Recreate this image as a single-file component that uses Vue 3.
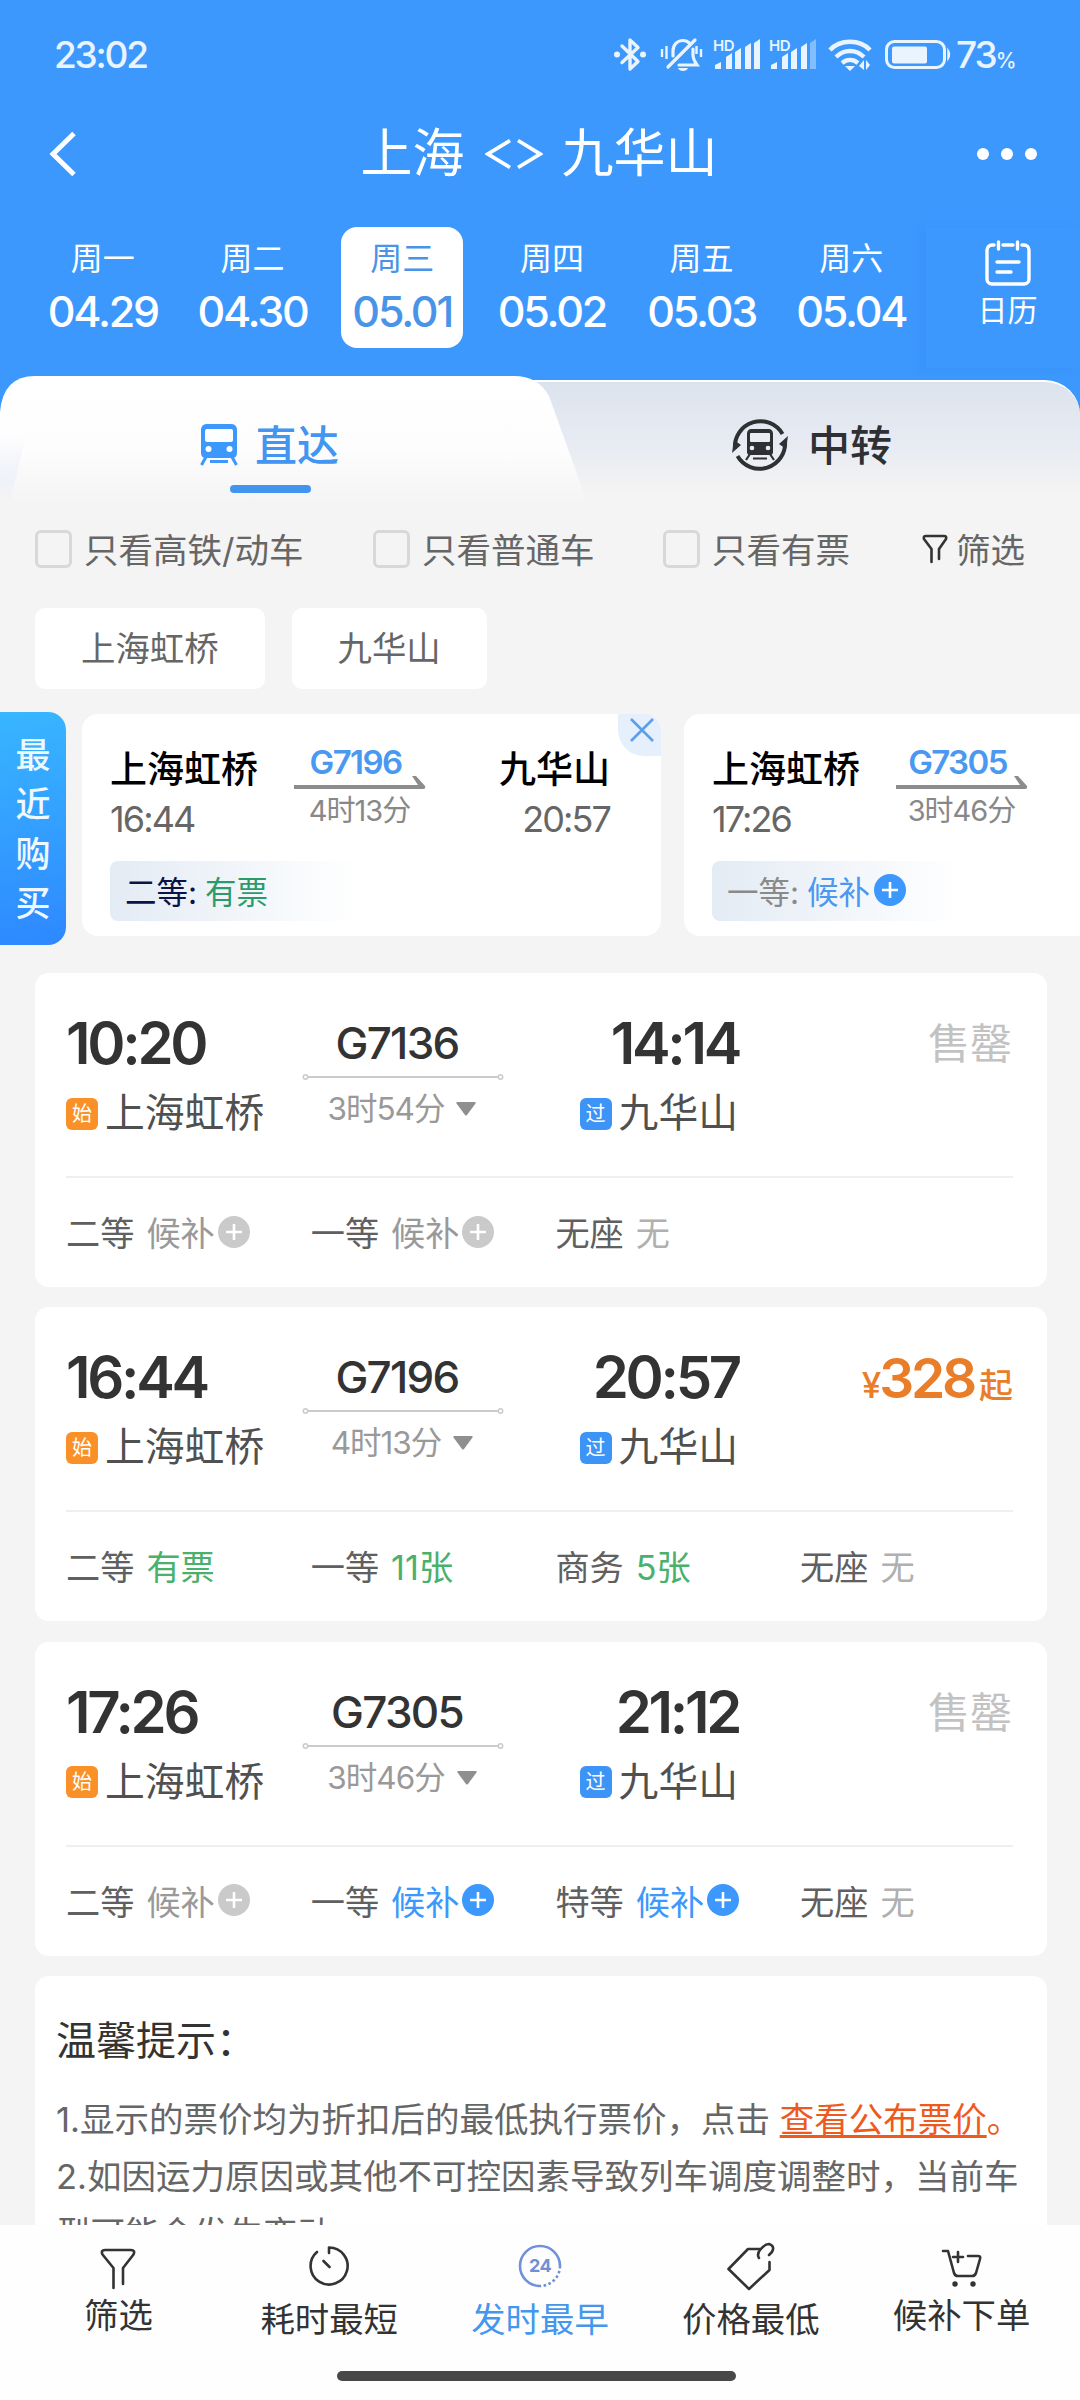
<script setup>
const days = [
  { week: '周一', date: '04.29' },
  { week: '周二', date: '04.30' },
  { week: '周三', date: '05.01', active: true },
  { week: '周四', date: '05.02' },
  { week: '周五', date: '05.03' },
  { week: '周六', date: '05.04' },
]

const recents = [
  {
    from: '上海虹桥', to: '九华山', start: '16:44', end: '20:57',
    code: 'G7196', cost: ['4', '13'], seat: '二等', state: '有票', type: 'ok', closable: true,
  },
  {
    from: '上海虹桥', start: '17:26',
    code: 'G7305', cost: ['3', '46'], seat: '一等', state: '候补', type: 'wait',
  },
]

const trains = [
  {
    start: '10:20', end: '14:14', code: 'G7136', cost: ['3', '54'], price: null,
    seats: [
      { name: '二等', state: '候补', type: 'off' },
      { name: '一等', state: '候补', type: 'off' },
      { name: '无座', state: '无', type: 'none' },
    ],
  },
  {
    start: '16:44', end: '20:57', code: 'G7196', cost: ['4', '13'], price: 328,
    seats: [
      { name: '二等', state: '有票', type: 'ok' },
      { name: '一等', state: '11张', type: 'ok' },
      { name: '商务', state: '5张', type: 'ok' },
      { name: '无座', state: '无', type: 'none' },
    ],
  },
  {
    start: '17:26', end: '21:12', code: 'G7305', cost: ['3', '46'], price: null,
    seats: [
      { name: '二等', state: '候补', type: 'off' },
      { name: '一等', state: '候补', type: 'wait' },
      { name: '特等', state: '候补', type: 'wait' },
      { name: '无座', state: '无', type: 'none' },
    ],
  },
]

const hasPlus = (type) => type === 'off' || type === 'wait'
</script>

<template>
  <div class="page">
    <header class="header">
      <div class="status">
        <span class="clock">23:02</span>
        <svg class="status-icons" width="372" height="44" viewBox="0 0 372 44" fill="none" stroke="#eaf4ff">
          <!-- bluetooth -->
          <path d="M9 12 25 27.500 17 35V6L25 13.500 9 28.500" stroke-width="3.400" stroke-linejoin="round" stroke-linecap="round" />
          <circle cx="4" cy="20.500" r="3" fill="#eaf4ff" stroke="none" />
          <circle cx="30" cy="20.500" r="3" fill="#eaf4ff" stroke="none" />
          <!-- muted bell -->
          <path d="M60 22v-5c0-6 4-10.500 10-10.500 3 0 5 1 7 3M80 15v6c0 4 2 7 4 10H66M55 33 82 6" stroke-width="3.200" stroke-linecap="round" />
          <path d="M49 15v8M53.500 12v13M88 15v8M83.500 12v8" stroke-width="2.400" />
          <path d="M65 34h10c-1 4-9 4-10 0z" fill="#eaf4ff" stroke="none" />
          <!-- signal bars -->
          <g fill="#eaf4ff" stroke="none">
            <text x="100" y="17" class="hd">HD</text>
            <path d="M102 35v-4l6-3v7zM113 35V23l6-4v16zM122 35V18l6-4v21zM132 35V13l6-4v26zM141 35V9l6-4v30z" />
            <text x="156" y="17" class="hd">HD</text>
            <path d="M158 35v-4l6-3v7zM169 35V23l6-4v16zM178 35V18l6-4v21zM188 35V13l6-4v26z" />
            <path d="M197 35V9l6-4v30z" opacity=".4" />
          </g>
          <!-- wifi -->
          <path d="M217 16c10-11 30-11 40 0M223 23c8-8 20-8 28 0M229 29c5-4 11-4 16 0" stroke-width="4.400" />
          <path d="M232 32h10l-5 5zM246 32l5-6v10zM253 26v10l4-5z" fill="#eaf4ff" stroke="none" />
          <!-- battery -->
          <rect x="273.500" y="7.500" width="58" height="26" rx="8" stroke-width="3" />
          <rect x="279" y="12.500" width="35" height="17" rx="2" fill="#eaf4ff" stroke="none" />
          <path d="M335 16q3 4.500 0 9z" fill="#eaf4ff" stroke-width="1.500" />
        </svg>
        <span class="battery">73<small>%</small></span>
      </div>

      <div class="nav">
        <svg width="30" height="46" viewBox="0 0 30 46"><path d="M27 2.500 6 23 27 43.500" fill="none" stroke="#fff" stroke-width="5" /></svg>
        <h1>上海<svg width="58" height="32" viewBox="0 0 58 32"><path d="M25 2.500 3 16l22 13.500M33 2.500 55 16 33 29.500" fill="none" stroke="#fff" stroke-width="3.800" /></svg>九华山</h1>
        <svg width="60" height="14" viewBox="0 0 60 14" fill="#fff"><circle cx="6" cy="7" r="6" /><circle cx="30" cy="7" r="6" /><circle cx="54" cy="7" r="6" /></svg>
      </div>

      <div class="days">
        <div v-for="d in days" :key="d.date" class="day" :class="{ active: d.active }">
          <div class="day-in">
            <span class="week">{{ d.week }}</span>
            <span class="date">{{ d.date }}</span>
          </div>
        </div>
        <div class="calendar">
          <svg width="46" height="46" viewBox="0 0 46 46" fill="none" stroke="#fff" stroke-width="3.400" stroke-linecap="round">
            <path d="M9 5H7a5 5 0 0 0-5 5v29a5 5 0 0 0 5 5h32a5 5 0 0 0 5-5V10a5 5 0 0 0-5-5h-2M18 5h10M13.500 2v7M32.500 2v7M12 22h22M12 32h14" />
          </svg>
          <span>日历</span>
        </div>
      </div>
    </header>

    <div class="tabs">
      <svg class="tabs-bg" width="1080" height="134" viewBox="0 0 1080 134">
        <defs>
          <linearGradient id="tabOn" x1="0" y1="0" x2="0" y2="1">
            <stop offset="0" stop-color="#fff" />
            <stop offset=".55" stop-color="#fdfdfe" />
            <stop offset=".95" stop-color="#f4f4f4" />
          </linearGradient>
          <linearGradient id="tabOff" x1="0" y1="0" x2="0" y2="1">
            <stop offset="0" stop-color="#dce3ee" />
            <stop offset=".5" stop-color="#e8ebf2" />
            <stop offset=".88" stop-color="#f4f4f4" />
          </linearGradient>
          <linearGradient id="tabEdge" x1="0" y1="0" x2="0" y2="1">
            <stop offset="0" stop-color="#eef1f8" stop-opacity="0" />
            <stop offset=".6" stop-color="#eff2f8" />
            <stop offset="1" stop-color="#f4f4f4" />
          </linearGradient>
        </defs>
        <path d="M0 0H1080V60H0z" fill="#3c98fd" />
        <path d="M500 134V4h545a35 35 0 0 1 35 35v95z" fill="#fff" />
        <path d="M500 134V6h545a35 33 0 0 1 35 33v95z" fill="url(#tabOff)" />
        <path d="M0 134V36Q3 0 35 0H514q24 0 35 20L590 134z" fill="url(#tabOn)" />
        <path d="M0 60H26L8 134H0z" fill="url(#tabEdge)" />
      </svg>
      <div class="tab on">
        <svg width="38" height="42" viewBox="0 0 38 42">
          <path d="M7 0h24q5 0 6 5v24q0 5-5 5H6q-5 0-5-5V5q1-5 6-5z" fill="#3c98fd" />
          <rect x="5" y="5" width="28" height="13" rx="2" fill="#fdfeff" />
          <circle cx="8.500" cy="25" r="3" fill="#fdfeff" /><circle cx="29.500" cy="25" r="3" fill="#fdfeff" />
          <path d="M6 33 1.500 41M32 33l4.500 8M10 37.500h18" stroke="#3c98fd" stroke-width="3" />
        </svg>
        <span>直达</span>
        <i></i>
      </div>
      <div class="tab off">
        <svg width="56" height="58" viewBox="0 0 56 58" fill="none" stroke="#2e3034">
          <path d="M3 33A25.500 25.500 0 0 1 50.500 18M53 25A25.500 25.500 0 0 1 5.500 40" stroke-width="4" />
          <path d="M0 37 9 29 2 24zM56 20l-9 8 7 5z" fill="#2e3034" stroke="none" />
          <path d="M19 13h18q3 0 4 4v19q0 3-3 3H18q-3 0-3-3V17q1-4 4-4z" fill="#2e3034" stroke="none" />
          <rect x="18" y="17" width="20" height="9" rx="1" fill="#e9ecf2" stroke="none" />
          <circle cx="20" cy="32" r="2.300" fill="#e9ecf2" stroke="none" /><circle cx="36" cy="32" r="2.300" fill="#e9ecf2" stroke="none" />
          <path d="M18 38l-4 6M38 38l4 6M21 42.500h14" stroke-width="2.200" />
        </svg>
        <span>中转</span>
      </div>
    </div>

    <main class="content">
      <div class="filters">
        <label class="check c1"><i></i><span>只看高铁/动车</span></label>
        <label class="check c2"><i></i><span>只看普通车</span></label>
        <label class="check c3"><i></i><span>只看有票</span></label>
        <span class="sift">
          <svg width="26" height="30" viewBox="0 0 26 30"><path d="M9.500 28V15L2 5Q1 2 4 2H22q3 0 2 3l-7 10V25" fill="none" stroke="#333" stroke-width="2.600" stroke-linecap="round" stroke-linejoin="round" /></svg>
          <span>筛选</span>
        </span>
      </div>

      <div class="chips">
        <span>上海虹桥</span>
        <span>九华山</span>
      </div>

      <section class="recent">
        <div class="recent-label"><b>最</b><b>近</b><b>购</b><b>买</b></div>
        <div v-for="r in recents" :key="r.code" class="recent-card">
          <div class="recent-row">
            <div class="recent-from">
              <strong>{{ r.from }}</strong>
              <time>{{ r.start }}</time>
            </div>
            <div class="recent-mid">
              <em>{{ r.code }}</em>
              <svg width="132" height="14" viewBox="0 0 132 14"><path d="M0 9H124L118 0h4l9 10q1 3-2 3H0z" fill="#8c8c8c" /></svg>
              <span>{{ r.cost[0] }}时{{ r.cost[1] }}分</span>
            </div>
            <div v-if="r.to" class="recent-to">
              <strong>{{ r.to }}</strong>
              <time>{{ r.end }}</time>
            </div>
          </div>
          <div class="recent-tag" :class="r.type">
            <span>{{ r.seat }}:</span><b>{{ r.state }}</b>
            <svg v-if="r.type === 'wait'" class="plus" viewBox="0 0 32 32"><circle cx="16" cy="16" r="16" /><path d="M16 8v16M8 16h16" /></svg>
          </div>
          <div v-if="r.closable" class="recent-close">
            <svg width="26" height="26" viewBox="0 0 26 26"><path d="M2 2 24 24M24 2 2 24" stroke="#5c9ded" stroke-width="2.600" /></svg>
          </div>
        </div>
      </section>

      <article v-for="t in trains" :key="t.code" class="train">
        <div class="train-main">
          <div class="col-from">
            <span class="time">{{ t.start }}</span>
            <span class="station"><i class="start">始</i>上海虹桥</span>
          </div>
          <div class="col-mid">
            <span class="code">{{ t.code }}</span>
            <svg width="202" height="8" viewBox="0 0 202 8" fill="#fff" stroke="#cbcbcb" stroke-width="1.500"><path d="M5 4H197" stroke-width="2" /><circle cx="3.500" cy="4" r="2.200" /><circle cx="198.500" cy="4" r="2.200" /></svg>
            <span class="cost">{{ t.cost[0] }}时{{ t.cost[1] }}分<svg width="20" height="14" viewBox="0 0 20 14"><path d="M1 0h18q1 0 .5 1.500L11 13q-1 1-2 0L.5 1.500Q0 0 1 0z" fill="#8f8f8f" /></svg></span>
          </div>
          <div class="col-to">
            <span class="time">{{ t.end }}</span>
            <span class="station"><i class="pass">过</i>九华山</span>
          </div>
          <div class="col-price">
            <span v-if="t.price" class="price"><small>¥</small>{{ t.price }}<em>起</em></span>
            <span v-else class="sold">售罄</span>
          </div>
        </div>
        <div class="seats">
          <div v-for="s in t.seats" :key="s.name" class="seat" :class="s.type">
            <span>{{ s.name }}</span><b>{{ s.state }}</b>
            <svg v-if="hasPlus(s.type)" class="plus" viewBox="0 0 32 32"><circle cx="16" cy="16" r="16" /><path d="M16 8v16M8 16h16" /></svg>
          </div>
        </div>
      </article>

      <section class="tips">
        <h2>温馨提示：</h2>
        <p>1.显示的票价均为折扣后的最低执行票价，点击 <a>查看公布票价</a><u>。</u></p>
        <p>2.如因运力原因或其他不可控因素导致列车调度调整时，当前车<br>型可能会发生变动</p>
      </section>
    </main>

    <footer class="bottom">
      <nav class="sorts">
        <div class="sort short">
          <svg width="48" height="50" viewBox="0 0 48 50"><path d="M19.500 43V23L8.500 9.500Q6.500 5 11 5H37q4.500 0 2.500 4.500L29 23V39" /></svg>
          <span>筛选</span>
        </div>
        <div class="sort">
          <svg width="48" height="50" viewBox="0 0 48 50"><path d="M24 9V3.500A18.500 18.500 0 1 1 12 8M18.500 17 24.500 23" /></svg>
          <span>耗时最短</span>
        </div>
        <div class="sort active">
          <svg width="48" height="50" viewBox="0 0 48 50"><path d="M24 42A20 20 0 1 1 44 22" /><path d="M44 22A20 20 0 0 1 24 42" stroke-dasharray="2.500 2.500" /><text x="24" y="28" text-anchor="middle">24</text></svg>
          <span>发时最早</span>
        </div>
        <div class="sort">
          <svg width="48" height="50" viewBox="0 0 48 50"><path d="M34 5H21L1.500 25 22 45 42.500 26V18M32 14c-4-6 6-14 10-14 6 2 5 7 0 11" /></svg>
          <span>价格最低</span>
        </div>
        <div class="sort short">
          <svg width="48" height="50" viewBox="0 0 48 50"><path d="M5 6h5l6 22q1 3 4 3H34q3 0 4-3l4-14q1-3-2-3H30M20 7v10M15 12H25" /><circle class="dot" cx="17" cy="39" r="2.700" /><circle class="dot" cx="35" cy="39" r="2.700" /></svg>
          <span>候补下单</span>
        </div>
      </nav>
      <div class="home"></div>
    </footer>
  </div>
</template>

<style>
body { margin: 0; background: #f4f4f4; }
</style>

<style scoped>
.page {
  width: 1080px; height: 2400px; overflow: hidden; display: flex; flex-direction: column;
  background: #f4f4f4; color: #333; font-family: Inter, "Noto Sans CJK SC", sans-serif;
}
svg { display: block; flex: none; }
i, em { font-style: normal; }
h1, h2, p { margin: 0; }

/* header */
.header { height: 376px; flex: none; background: #3c98fd; color: #fff; }
.status { height: 76px; padding: 34px 64px 0 54px; box-sizing: border-box; display: flex; color: #eaf4ff; }
.clock { font-size: 37px; line-height: 42px; font-weight: 500; letter-spacing: -2.200px; }
.status-icons { margin-left: auto; margin-right: -29px; }
.status-icons .hd { font-size: 15px; font-weight: 600; font-family: Inter, sans-serif; letter-spacing: -.5px; }
.battery { width: 60px; font-size: 37px; line-height: 42px; font-weight: 500; letter-spacing: -2px; white-space: nowrap; }
.battery small { font-size: 21px; letter-spacing: 0; }
.nav { height: 156px; padding: 0 43px 0 47px; display: flex; align-items: center; justify-content: space-between; }
.nav h1 { display: flex; align-items: center; font-size: 52px; font-weight: 400; line-height: 70px; margin-left: 24px; }
.nav h1 svg { margin: 0 19px 0 20px; }
.days { display: flex; padding: 0 0 0 28px; margin-top: -5px; }
.day { width: 149.700px; flex: none; display: flex; justify-content: center; }
.day-in {
  width: 122px; height: 121px; border-radius: 16px; display: flex; flex-direction: column; align-items: center;
}
.week { font-size: 32px; line-height: 40px; margin-top: 12px; }
.date { font-size: 43px; line-height: 44px; font-weight: 500; margin-top: 10px; letter-spacing: -2.200px; }
.day.active .day-in { background: #fff; color: #4a94e8; }
.calendar {
  flex: 1; height: 128px; padding: 12px 0 0 9px; margin-top: 1px; display: flex; flex-direction: column; align-items: center;
  box-shadow: -6px 2px 10px rgba(30, 110, 220, .1);
}
.calendar span { font-size: 30px; line-height: 36px; margin-top: 6px; }

/* tabs */
.tabs { position: relative; height: 134px; flex: none; display: flex; background: #f4f4f4; }
.tabs-bg { position: absolute; left: 0; top: 0; }
.tab { position: relative; display: flex; align-items: center; height: 138px; font-size: 42px; font-weight: 500; box-sizing: border-box; }
.tab span { margin-bottom: 5px; }
.tab.on { width: 540px; padding-left: 200px; color: #4295f0; }
.tab.on span { margin-left: 17px; }
.tab.on i { position: absolute; left: 230px; top: 109px; width: 81px; height: 8px; border-radius: 4px; background: #4295ee; }
.tab.off { padding-left: 192px; color: #2e3034; }
.tab.off span { margin-left: 20px; }

/* filters */
.content { flex: 1; min-height: 0; overflow: hidden; }
.filters { height: 78px; padding: 0 55px 0 35px; display: flex; align-items: center; font-size: 34.500px; color: #666; }
.filters span > span, .check span { margin-bottom: 3px; }
.check { display: flex; align-items: center; white-space: nowrap; flex: none; }
.check i { width: 31px; height: 32px; border: 3px solid #d8d8d8; border-radius: 6px; margin-right: 12px; }
.c1 { width: 338px; }
.c2 { width: 290px; }
.c3 { width: 259px; }
.sift { display: flex; align-items: center; gap: 8px; white-space: nowrap; }
.chips { display: flex; gap: 27px; padding: 20px 35px 0; }
.chips span {
  height: 81px; line-height: 81px; padding: 0 46px; background: #fff; border-radius: 10px;
  font-size: 34.400px; color: #666;
}

/* recent purchases */
.recent { display: flex; margin-top: 23px; height: 261px; }
.recent-label {
  width: 66px; height: 233px; flex: none; box-sizing: border-box; padding-top: 19px; border-radius: 0 18px 18px 0;
  display: flex; flex-direction: column; align-items: center; color: #eef8ff;
  background: linear-gradient(172deg, #38b6ff, #2e88ff);
}
.recent-label b { font-size: 35px; line-height: 49.300px; font-weight: 500; }
.recent-card {
  position: relative; width: 579px; height: 222px; flex: none; box-sizing: border-box; background: #fff;
  border-radius: 16px; margin: 2px 7px 0 16px; padding: 30px 51px 0 28px; overflow: hidden;
}
.recent-row { display: flex; height: 117px; }
.recent-from, .recent-to, .recent-mid { display: flex; flex-direction: column; }
.recent-to { margin-left: auto; align-items: flex-end; }
.recent-card strong { font-size: 37px; line-height: 50px; font-weight: 500; color: #000; margin-top: 1px; }
.recent-card time { font-size: 36px; line-height: 40px; color: #666; letter-spacing: -1.900px; margin-top: 4px; }
.recent-mid { width: 132px; margin-left: 36px; align-items: center; }
.recent-mid em { font-size: 33px; line-height: 32px; font-weight: 600; color: #4a98f0; letter-spacing: -1.600px; margin-top: 2px; margin-left: -9px; }
.recent-mid svg { margin-top: -2px; }
.recent-mid span { font-size: 29px; line-height: 34px; color: #888; letter-spacing: -1px; margin: 4px 0 0 -1px; }
.recent-tag {
  display: flex; align-items: center; width: 260px; height: 60px; padding: 0 0 3px 15px; box-sizing: border-box; border-radius: 8px;
  background: linear-gradient(90deg, #e3ebf4, #fff 96%); font-size: 31.500px; color: #0c1444;
}
.recent-tag b { font-weight: 400; margin-left: 8px; color: #2a9c6c; }
.recent-tag.wait { color: #8a8a8a; }
.recent-tag.wait b { color: #4a98f0; }
.recent-close {
  position: absolute; right: 0; top: 0; width: 43px; height: 42px; background: #e6f0fd;
  border-bottom-left-radius: 26px; padding: 3px 0 0 11px; box-sizing: border-box;
}
.plus { width: 32px; height: 32px; margin-left: 4px; fill: #3c98fd; stroke: #fff; stroke-width: 2.600; }
.plus circle { stroke: none; }

/* train cards */
.train { height: 314px; margin: 0 33px 20.300px 35px; padding: 0 34px 0 31px; box-sizing: border-box; background: #fff; border-radius: 14px; }
.train-main { display: flex; height: 205px; box-sizing: border-box; border-bottom: 2px solid #efefef; padding-top: 40px; }
.col-from, .col-to, .col-mid { display: flex; flex-direction: column; }
.time { font-size: 58px; line-height: 60px; font-weight: 600; letter-spacing: -3.300px; }
.station { display: flex; align-items: center; font-size: 39.800px; line-height: 50px; margin-top: 15px; color: #505050; white-space: nowrap; }
.station i {
  width: 32px; height: 32px; border-radius: 6px; margin: 1px 7px 0 0; color: #fff; font-size: 20px;
  line-height: 32px; text-align: center;
}
.station .start { background: #fa9128; }
.station .pass { background: #3c94f6; }
.col-from { width: 236px; }
.col-mid { width: 202px; align-items: center; }
.code { font-size: 44px; line-height: 48px; font-weight: 500; letter-spacing: -1.700px; margin: 6px 0 0 -12px; }
.col-mid > svg { margin-top: 6px; }
.cost { display: flex; align-items: center; font-size: 31.500px; line-height: 36px; letter-spacing: -1px; color: #999; margin: 10px 0 0 -2px; }
.cost svg { margin-left: 12px; }
.col-to { width: 234px; align-items: flex-end; }
.col-to .time { margin-right: -1px; }
.col-price { margin-left: auto; padding-top: 3px; line-height: 56px; }
.sold { font-size: 42px; color: #c2c2c2; margin-right: 1px; }
.price { font-size: 55px; font-weight: 600; color: #ea7d28; letter-spacing: -3.200px; white-space: nowrap; }
.price small { font-size: 35px; font-weight: 500; margin-right: 1px; }
.price em { font-size: 34px; font-weight: 500; letter-spacing: 0; margin-left: 5px; }
.seats { display: flex; height: 107px; align-items: center; font-size: 34.200px; color: #606060; }
.seat { width: 244.700px; flex: none; display: flex; align-items: center; }
.seat span, .seat b { margin-bottom: 1px; }
.seat b { font-weight: 400; margin-left: 12px; }
.seat.off b { color: #999; }
.seat.off .plus { fill: #cacaca; }
.seat.none b { color: #b0b0b0; }
.seat.ok b { color: #4ab06c; }
.seat.wait b { color: #3c98fd; }
.seat .plus { margin-left: 3px; }

/* tips */
.tips { margin: 0 33px 0 35px; padding: 35px 0 0 21px; background: #fff; border-radius: 14px; height: 400px; }
.tips h2 { font-size: 40px; line-height: 60px; font-weight: 400; margin-bottom: 20px; }
.tips p { font-size: 34.500px; line-height: 57.300px; color: #666; white-space: nowrap; }
.tips a { color: #ee5a1e; text-decoration: underline; text-decoration-thickness: 3px; text-underline-offset: 3px; }
.tips u { color: #ee5a1e; text-decoration: none; }

/* bottom bar */
.bottom { height: 175px; flex: none; background: #fefefe; }
.sorts { display: flex; padding: 17px 13px 0 13px; height: 129px; }
.sort { flex: 1; display: flex; flex-direction: column; align-items: center; font-size: 34.400px; }
.sort svg { overflow: visible; fill: none; stroke: #333; stroke-width: 2.600; stroke-linecap: round; stroke-linejoin: round; margin-top: 2px; }
.sort span { line-height: 44px; margin-top: 4px; }
.sort.short svg { margin-top: 3px; }
.sort.short span { margin-top: -1px; }
.sort .dot { fill: #333; stroke: none; }
.sort text { font-size: 18px; font-weight: 700; fill: #6f90d6; stroke: none; letter-spacing: -.5px; }
.sort.active { color: #4597ee; }
.sort.active svg { stroke: #6f90dc; stroke-linecap: butt; }
.home { width: 399px; height: 10px; border-radius: 5px; background: #484848; margin-left: 337px; }
</style>
